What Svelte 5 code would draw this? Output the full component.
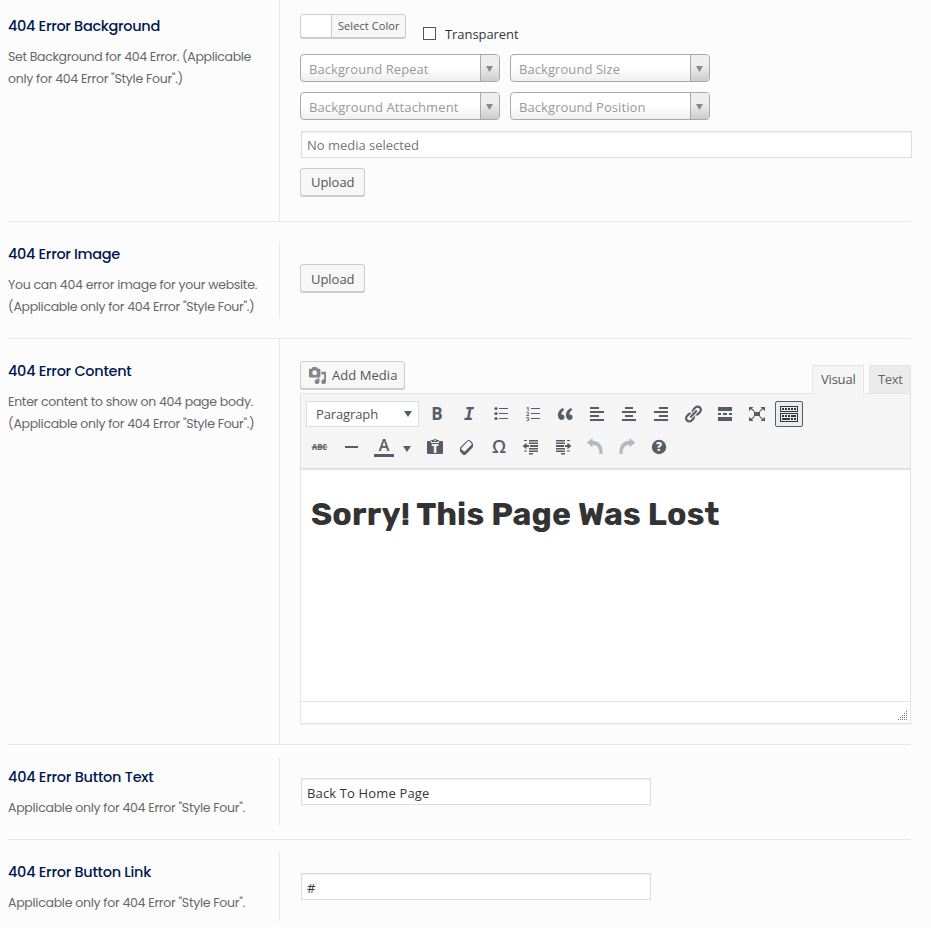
<script>
  // Spreads a label over a fixed advance width by adjusting its tracking.
  function track(node, width) {
    const chars = node.textContent.length;
    const natural = node.getBoundingClientRect().width;
    node.style.letterSpacing = `${(width - natural) / chars}px`;
  }

  const rows = [
    { id: 'background', title: ['404 Error Background', 152], lines: [['Set Background for 404 Error. (Applicable', 243], ['only for 404 Error "Style Four".)', 175]] },
    { id: 'image', title: ['404 Error Image', 112], lines: [['You can 404 error image for your website.', 249], ['(Applicable only for 404 Error "Style Four".)', 246.5]] },
    { id: 'content', title: ['404 Error Content', 123.5], lines: [['Enter content to show on 404 page body.', 245], ['(Applicable only for 404 Error "Style Four".)', 246.5]] },
    { id: 'text', title: ['404 Error Button Text', 145.5], lines: [['Applicable only for 404 Error "Style Four".', 237]], value: ['Back To Home Page', 122.5] },
    { id: 'link', title: ['404 Error Button Link', 143], lines: [['Applicable only for 404 Error "Style Four".', 237]], value: ['#', 8] }
  ];

  const selects = [
    ['Background Repeat', 119.5],
    ['Background Size', 101],
    ['Background Attachment', 149.5],
    ['Background Position', 126.5]
  ];

  const tools1 = ['bold', 'italic', 'ul', 'ol', 'quote', 'left', 'center', 'right', 'link', 'more', 'full', 'sink'];
  const tools2 = ['strike', 'hr', 'color', 'paste', 'eraser', 'omega', 'outdent', 'indent', 'undo', 'redo', 'help'];

  const paths = {
    quote: 'M9.49 13.22c0-.74-.2-1.38-.61-1.9-.62-.78-1.83-.88-2.53-.72-.29-1.65 1.11-3.75 2.92-4.65L7.88 4c-2.73 1.3-5.42 4.28-4.96 8.05C3.21 14.43 4.59 16 6.54 16c.85 0 1.56-.25 2.12-.75s.83-1.18.83-2.03zm8.05 0c0-.74-.2-1.38-.61-1.9-.63-.78-1.83-.88-2.53-.72-.29-1.65 1.11-3.75 2.92-4.65L15.93 4c-2.73 1.3-5.41 4.28-4.95 8.05.28 2.38 1.66 3.95 3.61 3.95.85 0 1.56-.25 2.12-.75s.83-1.18.83-2.03z',
    left: 'M12 5V3H3v2h9zm5 4V7H3v2h14zm-5 4v-2H3v2h9zm5 4v-2H3v2h14z',
    center: 'M14 5V3H6v2h8zm3 4V7H3v2h14zm-3 4v-2H6v2h8zm3 4v-2H3v2h14z',
    right: 'M17 5V3H8v2h9zm0 4V7H3v2h14zm0 4v-2H8v2h9zm0 4v-2H3v2h14z',
    link: 'M17.74 2.76c1.68 1.69 1.68 4.41 0 6.1l-1.53 1.52c-1.12 1.12-2.7 1.47-4.14 1.09l2.62-2.61.76-.77.76-.76c.84-.84.84-2.2 0-3.04-.84-.85-2.2-.85-3.04 0l-.77.76-3.38 3.38c-.37-1.44-.02-3.02 1.1-4.14l1.52-1.53c1.69-1.68 4.42-1.68 6.1 0zM8.59 13.43l5.34-5.34c.42-.42.42-1.1 0-1.52-.44-.43-1.13-.39-1.53 0l-5.33 5.34c-.42.42-.42 1.1 0 1.52.44.43 1.13.39 1.52 0zm-.76 2.29l4.14-4.15c.38 1.44.03 3.02-1.09 4.14l-1.52 1.53c-1.69 1.68-4.41 1.68-6.1 0-1.68-1.68-1.68-4.42 0-6.1l1.53-1.52c1.12-1.12 2.7-1.47 4.14-1.1l-4.14 4.15c-.85.84-.85 2.2 0 3.05.84.84 2.2.84 3.04 0z',
    more: 'M17 7V3H3v4h14zM6 11V9H3v2h3zm6 0V9H8v2h4zm5 0V9h-3v2h3zm0 6v-4H3v4h14z',
    full: 'M7 8h6v4H7zM2 3h4.5L5 4.5l3 2.8-.8.8-3-2.8L2 7zM18 3v4l-2.200-1.700-3 2.800-.8-.8 3-2.800L13.500 3zM2 17v-4l2.200 1.700 3-2.800.8.8-3 2.800L6.500 17zM18 17h-4.500l1.500-1.500-3-2.800.8-.8 3 2.800L18 13z',
    sink: 'M19 2v6H1V2h18zm-1 5V3H2v4h16zM5 4v2H3V4h2zm3 0v2H6V4h2zm3 0v2H9V4h2zm3 0v2h-2V4h2zm3 0v2h-2V4h2zm2 5v9H1V9h18zm-1 8v-7H2v7h16zM5 11v2H3v-2h2zm3 0v2H6v-2h2zm3 0v2H9v-2h2zm6 0v2h-5v-2h5zm-6 3v2H3v-2h8zm3 0v2h-2v-2h2zm3 0v2h-2v-2h2z',
    eraser: 'M14.29 4.59l1.1 1.11c.41.4.61.94.61 1.47v2.12c0 .53-.2 1.07-.61 1.47l-6.63 6.63c-.4.41-.94.61-1.47.61s-1.07-.2-1.47-.61l-1.11-1.1-1.1-1.11c-.41-.4-.61-.94-.61-1.47v-2.12c0-.54.2-1.07.61-1.48l6.63-6.62c.4-.41.94-.61 1.47-.61s1.06.2 1.47.61zm-6.21 9.7l6.42-6.42c.39-.39.39-1.03 0-1.43L12.36 4.3c-.19-.19-.45-.29-.72-.29s-.52.1-.71.29l-6.42 6.42c-.39.4-.39 1.04 0 1.43l2.14 2.14c.38.38 1.04.38 1.43 0z',
    outdent: 'M3 3h3v1H3zM8 3h9v1.500H8zM8 5.500h9V7H8zM9 8h8v2H9zM8 11h9v1.500H8zM3 13.500h3v1H3zM8 13.500h9V15H8zM8 16h4v1.500H8zM1.500 9 5.500 5.700v2.300H8v2H5.500v2.300z',
    indent: 'M14 3h3v1h-3zM3 3h9v1.500H3zM3 5.500h9V7H3zM3 8h8v2H3zM3 11h9v1.500H3zM14 13.500h3v1h-3zM3 13.500h9V15H3zM8 16h4v1.500H8zM18.500 9 14.500 5.700v2.300H12v2h2.500v2.300z',
    hr: 'M4 9h13v2H4z',
    undo: 'M1.800 5.500 7.500 1v2.800c6 .1 10.600 4.200 10 13.200h-3.200c.5-6-2.300-9.100-6.800-9.200v2.700z',
    redo: 'M18.200 5.500 12.500 1v2.800c-6 .1-10.600 4.200-10 13.200h3.200c-.5-6 2.300-9.100 6.800-9.200v2.700z'
  };
</script>

{#snippet label([text, width])}<span class="fit" use:track={width}>{text}</span>{/snippet}

{#snippet icon(name)}
  <svg class="icon" viewBox="0 0 20 20" width="20" height="20">
    {#if name === 'bold'}
      <text x="10" y="15.500" font-size="17" font-weight="700" text-anchor="middle">B</text>
    {:else if name === 'italic'}
      <text class="slab" x="10" y="16" font-size="17" text-anchor="middle">I</text>
    {:else if name === 'omega'}
      <text x="10" y="16" font-size="18" font-weight="600" text-anchor="middle">Ω</text>
    {:else if name === 'strike'}
      <text x="3" y="13" font-size="8" font-weight="700" textLength="15" lengthAdjust="spacingAndGlyphs">ABC</text>
      <path d="M2.500 9.500h16v1h-16z" />
    {:else if name === 'ul'}
      <path d="M8 4h9v1H8zM8 9h9v1H8zM8 14h9v1H8z" />
      <circle cx="5" cy="4.500" r="1.600" /><circle cx="5" cy="9.500" r="1.600" /><circle cx="5" cy="14.500" r="1.600" />
    {:else if name === 'ol'}
      <path d="M8 4h9v1H8zM8 9h9v1H8zM8 14h9v1H8z" />
      <text y="6.500" font-size="6" font-weight="700"><tspan x="3">1</tspan><tspan x="3" dy="5">2</tspan><tspan x="3" dy="5">3</tspan></text>
    {:else if name === 'paste'}
      <path d="M3 4h3V3h2.200a1.900 1.900 0 0 1 3.600 0H14v1h3q1 0 1 1v11q0 1-1 1H3q-1 0-1-1V5q0-1 1-1z" />
      <path d="M6 4v2h8V4h-1v1H7V4zM9.300 2.500h1.400v1.400H9.300z" fill="#f5f5f5" />
      <text x="10" y="15.600" font-size="12" font-weight="800" text-anchor="middle" fill="#f5f5f5">T</text>
    {:else if name === 'help'}
      <circle cx="10" cy="10" r="7.200" />
      <text x="10" y="14.200" font-size="12" font-weight="800" text-anchor="middle" fill="#f5f5f5">?</text>
    {:else}
      <path d={paths[name]} />
    {/if}
  </svg>
{/snippet}

<main>
  {#each rows as row}
    <section class="row {row.id}">
      <div class="info">
        <h3>{@render label(row.title)}</h3>
        {#each row.lines as line}<p>{@render label(line)}</p>{/each}
      </div>
      <div class="field">
        {#if row.id === 'background'}
          <div class="color-line">
            <button class="picker"><i></i><b>{@render label(['Select Color', 61.5])}</b></button>
            <span class="box"></span>
            <span class="transparent">{@render label(['Transparent', 73.5])}</span>
          </div>
          <div class="selects">
            {#each selects as s}
              <div class="select"><span>{@render label(s)}</span><i><svg width="7" height="6"><path d="M0 0h7L3.500 6z" fill="#888" /></svg></i></div>
            {/each}
          </div>
          <div class="input media">{@render label(['No media selected', 112])}</div>
          <button class="btn">{@render label(['Upload', 43.5])}</button>
        {:else if row.id === 'image'}
          <button class="btn">{@render label(['Upload', 43.5])}</button>
        {:else if row.id === 'content'}
          <div class="head">
            <button class="btn add">
              <svg width="19" height="19" viewBox="0 0 20 20" fill="#82878c"><path d="M13 11V4c0-.55-.45-1-1-1h-1.670L9 1H5L3.670 3H2c-.55 0-1 .45-1 1v7c0 .55.45 1 1 1h10c.55 0 1-.45 1-1zM7 4.500c1.380 0 2.500 1.120 2.500 2.500S8.380 9.500 7 9.500 4.500 8.380 4.500 7 5.620 4.500 7 4.500zM14 6h5v10.500c0 1.380-1.120 2.500-2.500 2.500S14 17.880 14 16.500s1.120-2.500 2.500-2.500c.17 0 .34.02.5.05V9h-3V6zm-4 8.050V13h2v3.500c0 1.380-1.120 2.500-2.500 2.500S7 17.880 7 16.500 8.120 14 9.500 14c.17 0 .34.02.5.05z" /></svg>
              {@render label(['Add Media', 65.5])}
            </button>
            <div class="tabs">
              <span class="tab active">{@render label(['Visual', 34.5])}</span>
              <span class="tab">{@render label(['Text', 24.5])}</span>
            </div>
          </div>
          <div class="editor">
            <div class="toolbar">
              <div class="tools">
                <div class="format">{@render label(['Paragraph', 62])}<svg width="8" height="6"><path d="M0 0h8L4 6z" fill="#555d66" /></svg></div>
                {#each tools1 as t}<span class="tool" class:on={t === 'sink'}>{@render icon(t)}</span>{/each}
              </div>
              <div class="tools second">
                {#each tools2 as t}
                  {#if t === 'color'}
                    <span class="ink"><b>A</b><svg width="8" height="6"><path d="M0 0h8L4 6z" fill="#555d66" /></svg></span>
                  {:else}
                    <span class="tool {t}">{@render icon(t)}</span>
                  {/if}
                {/each}
              </div>
            </div>
            <div class="page"><h1>{@render label(['Sorry! This Page Was Lost', 408.5])}</h1></div>
            <div class="status">
              <svg width="10" height="10" fill="#777">
                {#each [0, 1, 2, 3, 4] as r}
                  {#each Array(r + 1) as _, c}<rect x={8 - c * 2} y={r * 2} width="1" height="1" />{/each}
                {/each}
              </svg>
            </div>
          </div>
        {:else}
          <div class="input short">{@render label(row.value)}</div>
        {/if}
      </div>
    </section>
  {/each}
</main>

<style>
  :global(body) { background: #fcfcfc; overflow: hidden; }
  main {
    box-sizing: border-box;
    width: 931px;
    height: 928px;
    padding: 0 20px 0 8px;
    overflow: hidden;
    background: #fcfcfc;
    color: #32373c;
    font: 13px/18px "Segoe UI", "Open Sans", "Noto Sans", sans-serif;
  }
  main * { box-sizing: border-box; }
  .fit { display: inline-block; white-space: nowrap; }
  button { font: inherit; color: #555; margin: 0; cursor: pointer; }

  .row { display: flex; border-bottom: 1px solid #e7e7e7; }
  .info { width: 272px; flex: none; border-right: 1px solid #e7e7e7; }
  .field { width: 612px; flex: none; margin-left: 20px; }
  h3 {
    margin: 0 0 8px;
    font: 500 14.500px/24px Poppins, Inter, sans-serif;
    color: #00174e;
  }
  p { margin: 0; font: 12.500px/22px Poppins, Inter, sans-serif; color: #666; }

  .background { height: 222px; }
  .background .info, .background .field { padding-top: 14px; }
  .image { height: 117px; padding: 20px 0; }
  .image .field { padding-top: 22px; }
  .image .btn { line-height: 28px; }
  .content { height: 406px; }
  .content .info { padding-top: 20px; }
  .content .field { padding-top: 22px; }
  .text, .link { height: 95px; padding: 12px 0 13px; }
  .link { border-bottom: 0; }
  .text .info, .link .info { padding-top: 8px; height: 69px; }
  .text .field, .link .field { padding-top: 21px; }

  .color-line { display: flex; height: 40px; }
  .picker {
    display: flex; width: 106px; height: 24px; padding: 0; overflow: hidden;
    border: 1px solid #ccc; border-radius: 3px; background: #fff; box-shadow: 0 1px 0 #ccc;
  }
  .picker i { width: 30px; height: 100%; flex: none; }
  .picker b {
    flex: 1; height: 100%; padding-left: 6px; text-align: left;
    font-weight: 400; font-size: 11px; line-height: 22px;
    border-left: 1px solid #ccc; background: #f7f7f7;
  }
  .box { width: 13px; height: 13px; margin: 13px 9px 0 17px; border: 1px solid #555; background: #fff; }
  .transparent { padding-top: 11px; }

  .selects { display: flex; flex-wrap: wrap; gap: 10px; width: 410px; }
  .select {
    display: flex; width: 200px; height: 28px; border: 1px solid #aaa; border-radius: 4px; overflow: hidden;
    background: linear-gradient(#fff 50%, #eee); color: #999;
  }
  .select > span { flex: 1; padding-left: 8px; line-height: 28px; }
  .select i {
    display: flex; align-items: center; justify-content: center; width: 19px; padding: 2px 1px 0 0;
    border-left: 1px solid #aaa; background: linear-gradient(#eee 40%, #ccc);
  }
  .input {
    height: 27px; padding-left: 5px; margin-left: 1px; line-height: 26px;
    border: 1px solid #ddd; background: #fff; box-shadow: inset 0 1px 2px rgba(0, 0, 0, .07);
  }
  .media { width: 611px; margin-top: 11px; margin-bottom: 10px; color: #757575; }
  .short { width: 350px; line-height: 28px; }
  .btn {
    display: block; width: 65px; height: 28px; padding: 0 0 0 10px; text-align: left; line-height: 26px;
    border: 1px solid #ccc; border-radius: 3px; background: #f7f7f7; box-shadow: 0 1px 0 #ccc;
  }

  .head { display: flex; justify-content: space-between; width: 611px; height: 33px; position: relative; z-index: 1; }
  .add { display: flex; align-items: center; gap: 5px; width: 105px; padding-left: 7px; }
  .tabs { display: flex; gap: 5px; padding-top: 4px; height: 33px; }
  .tab {
    height: 28px; padding: 0 8px; line-height: 27px; border: 1px solid #e5e5e5; border-bottom: 0;
    background: #ebebeb; color: #666; width: 42px;
  }
  .tab.active { width: 52px; height: 29px; background: #f5f5f5; color: #555; }
  .editor {
    width: 611px; height: 331px; margin-top: -1px; border: 1px solid #e5e5e5; background: #fff;
    box-shadow: 0 1px 1px rgba(0, 0, 0, .04);
  }
  .toolbar {
    height: 75px; padding: 3px 0 0 5px; background: #f5f5f5; border-bottom: 1px solid #ddd;
    box-shadow: 0 1px 1px rgba(0, 0, 0, .1); color: #555d66;
  }
  .tools { display: flex; align-items: center; height: 34px; }
  .second { margin-left: -3px; height: 32px; }
  .format {
    display: flex; align-items: center; justify-content: space-between; width: 113px; height: 26px;
    margin-right: 2px; padding: 0 6px 0 9px; border: 1px solid #ddd; background: #fff; color: #50575e;
  }
  .tool { display: flex; align-items: center; justify-content: center; width: 28px; height: 26px; margin: 0 2px; flex: none; border-radius: 2px; }
  .tool.on { border: 1px solid #555d66; background: #ebebeb; color: #32373c; }
  .tool.undo, .tool.redo { color: #b4b9be; }
  .icon { display: block; overflow: visible; fill: currentColor; font-family: "Open Sans", sans-serif; }
  .icon .slab { font-family: "DejaVu Sans Mono", monospace; font-weight: 700; font-style: italic; }
  .ink { display: flex; align-items: center; width: 52px; padding-left: 7px; gap: 9px; flex: none; }
  .ink b { width: 20px; height: 20px; text-align: center; font-size: 16px; font-weight: 600; line-height: 17px; border-bottom: 3px solid #555d66; }
  .ink svg { margin-top: 3px; }

  .page { height: 232px; padding: 25px 10px 0; }
  h1 { margin: 0; font: 700 32px/40px Rubik, Inter, sans-serif; color: #333; }
  .status { display: flex; justify-content: flex-end; align-items: flex-end; height: 22px; padding: 0 2px 2px; border-top: 1px solid #e5e5e5; }
</style>
